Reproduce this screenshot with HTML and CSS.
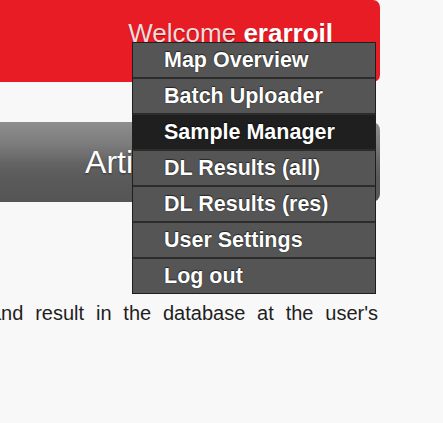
FILE: index.html
```html
<!DOCTYPE html>
<html lang="en">
<head>
<meta charset="utf-8">
<title>Artifact Search</title>
<link rel="stylesheet" href="styles.css">
</head>
<body>
<div class="page">
  <header class="topbar">
    <div class="welcome">Welcome <b class="user">erarroil</b></div>
    <ul class="menu">
      <li class="menu-item">Map Overview</li>
      <li class="menu-item">Batch Uploader</li>
      <li class="menu-item active">Sample Manager</li>
      <li class="menu-item">DL Results (all)</li>
      <li class="menu-item">DL Results (res)</li>
      <li class="menu-item">User Settings</li>
      <li class="menu-item">Log out</li>
    </ul>
  </header>
  <div class="titlebar"><h1 class="title">Artifact Search</h1></div>
  <p class="text">and result in the database at the user's</p>
</div>
</body>
</html>
```

FILE: styles.css
```css
html, body {
  margin: 0;
  padding: 0;
  background: #f8f8f8;
}
body {
  font-family: "Liberation Sans", Arial, Helvetica, sans-serif;
  overflow: hidden;
}
.page {
  width: 380px;
}
.topbar {
  position: relative;
  height: 82px;
  background: #e81c24;
  border-radius: 0 7px 7px 0;
  box-sizing: border-box;
  padding: 18px 47px 0 0;
  display: flex;
  justify-content: flex-end;
}
.welcome {
  font-size: 26px;
  line-height: 30px;
  color: #f0dcdc;
  text-shadow: 0 1px 1px rgba(80, 0, 0, 0.45);
  white-space: nowrap;
}
.user {
  color: #ffffff;
  font-weight: bold;
}
.menu {
  position: absolute;
  left: 132px;
  top: 42px;
  width: 244px;
  box-sizing: border-box;
  margin: 0;
  padding: 0;
  list-style: none;
  background: #555555;
  border: 1px solid #1f1f1f;
  z-index: 5;
}
.menu-item {
  height: 34px;
  line-height: 34px;
  padding-left: 31px;
  font-size: 21.5px;
  font-weight: bold;
  color: #ffffff;
  text-shadow: 0 0 1px rgba(0, 0, 0, 0.8), 0 -1px 1px rgba(0, 0, 0, 0.5);
  border-bottom: 2px solid #2c2c2c;
  white-space: nowrap;
}
.menu-item:last-child {
  border-bottom: none;
}
.menu-item.active {
  background: #1f1f1f;
}
.titlebar {
  margin-top: 40px;
  height: 80px;
  border-radius: 0 8px 8px 0;
  background: linear-gradient(to bottom, #8e8e8e 0%, #7a7a7a 30%, #636363 52%, #5a5a5a 70%, #555555 100%);
  display: flex;
  align-items: center;
  justify-content: center;
}
.title {
  margin: 0;
  font-size: 32px;
  font-weight: normal;
  color: #ffffff;
  text-shadow: 0 1px 2px rgba(0, 0, 0, 0.5);
  white-space: nowrap;
}
.text {
  margin: 99px 0 0 -10px;
  width: 388px;
  font-size: 20px;
  line-height: 24px;
  color: #1e1e1e;
  text-align: justify;
  text-align-last: justify;
  white-space: nowrap;
}
```
